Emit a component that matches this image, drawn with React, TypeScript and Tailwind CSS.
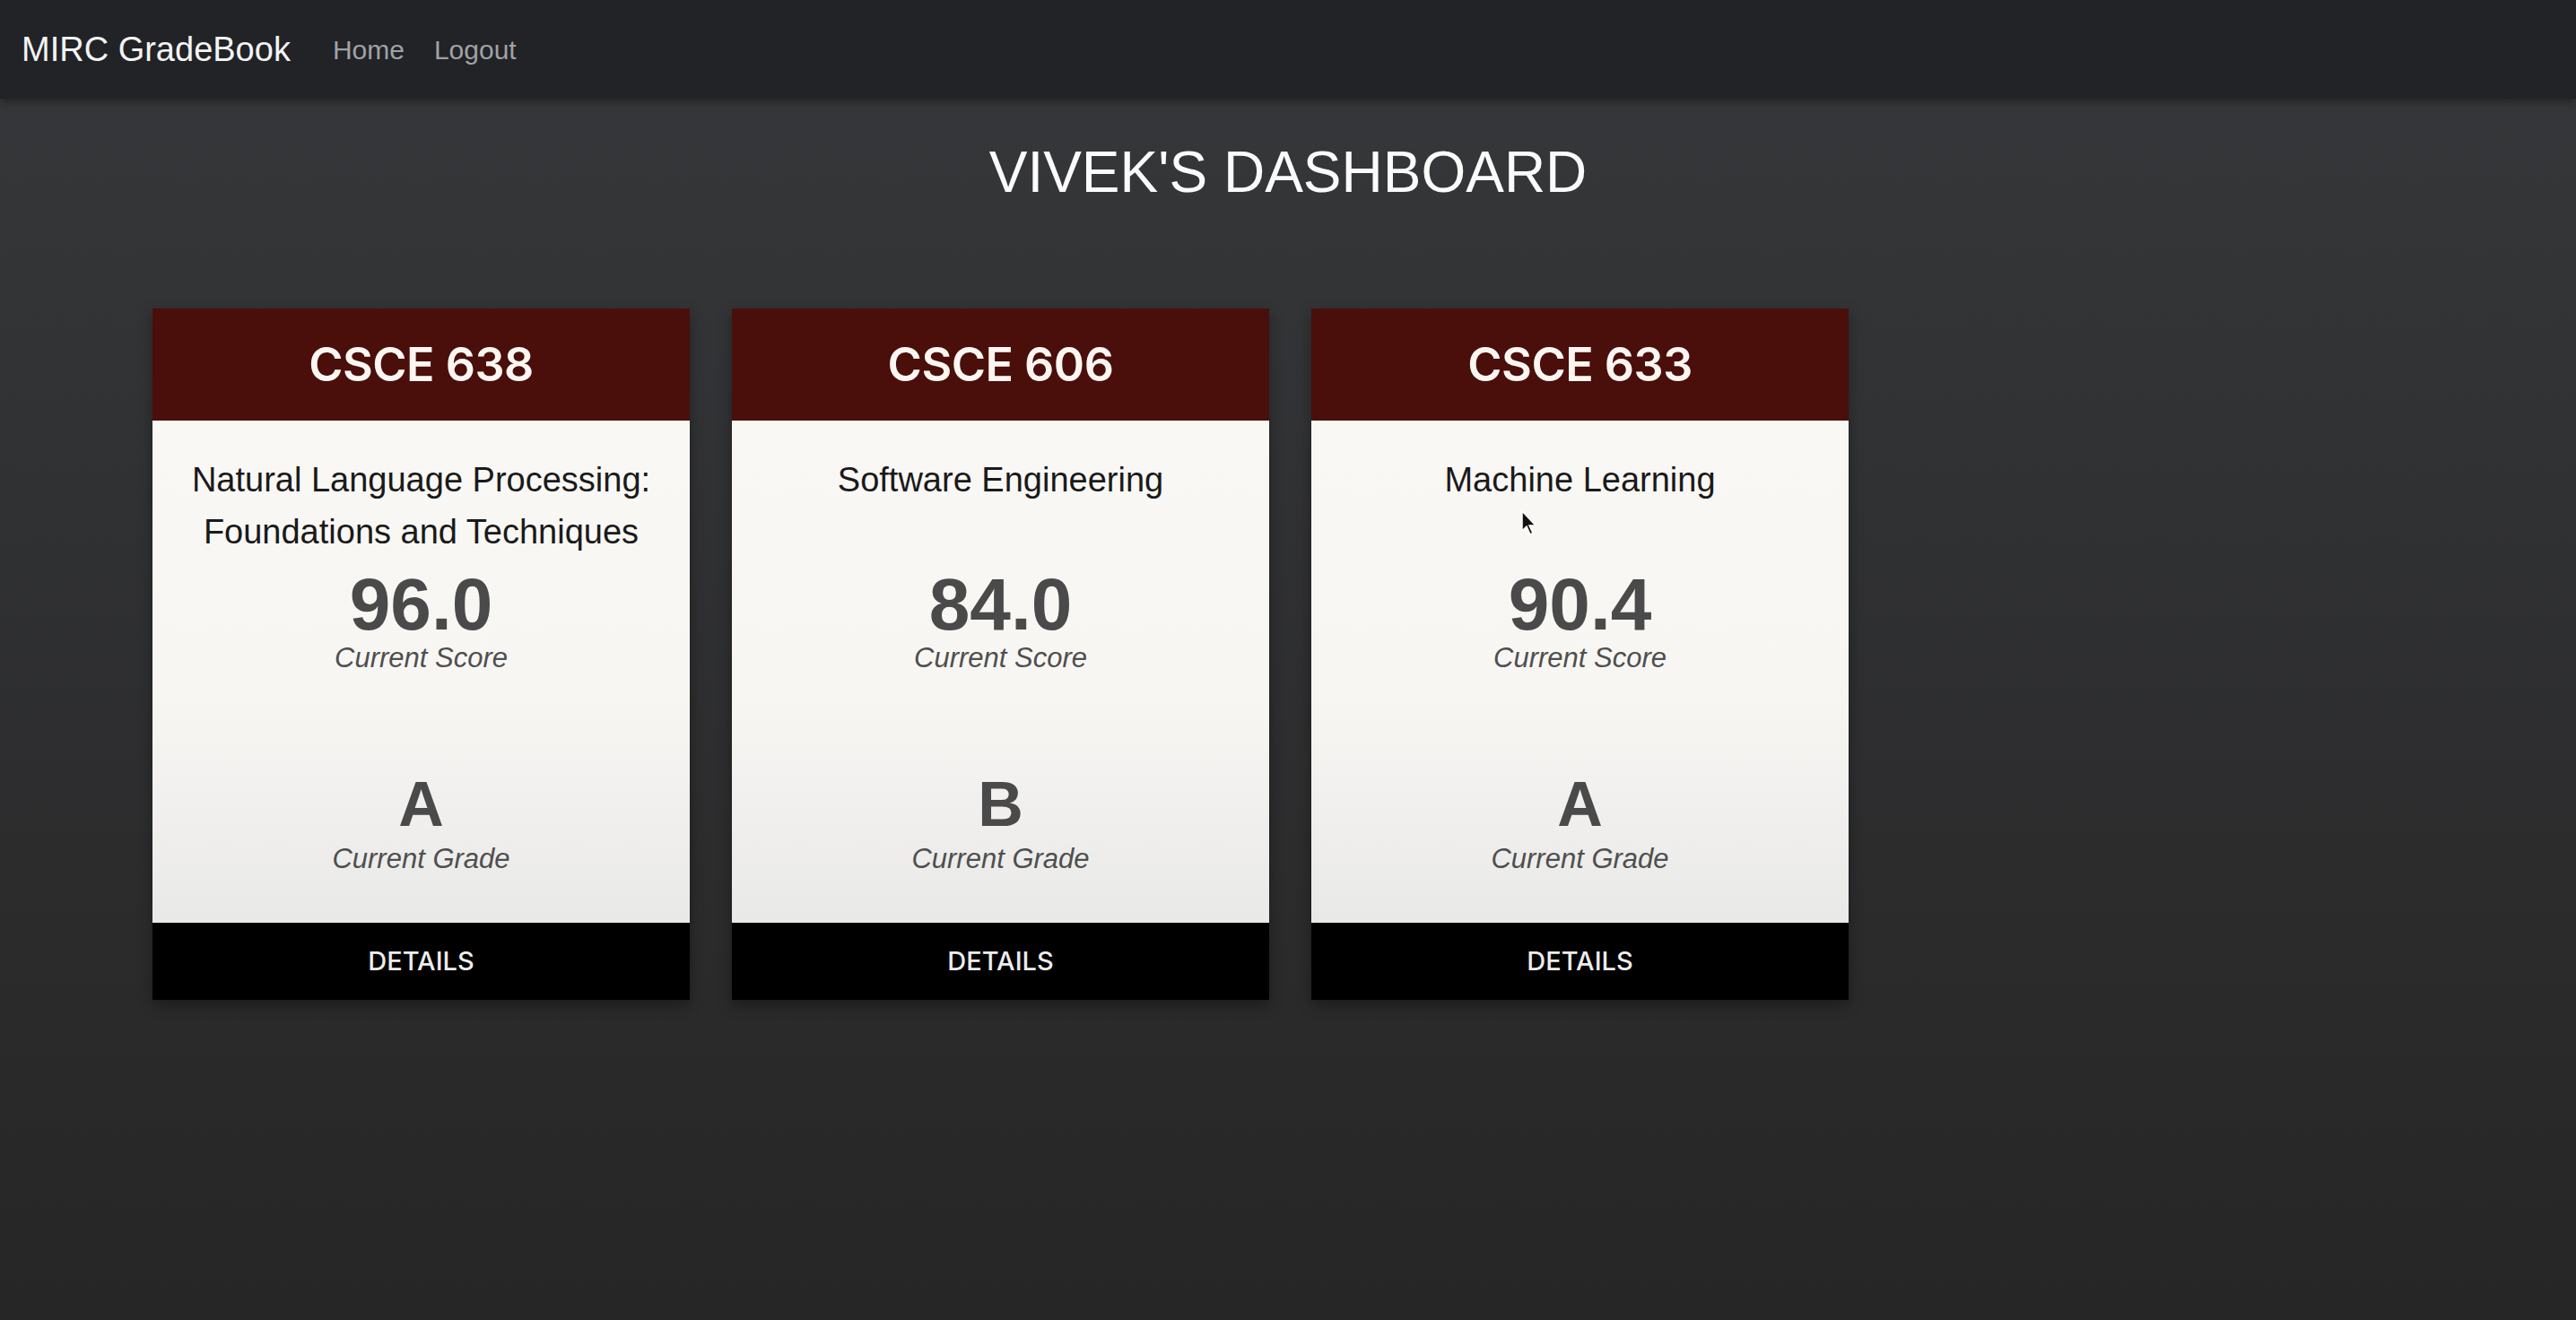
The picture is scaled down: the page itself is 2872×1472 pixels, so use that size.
import React from "react";

interface Course {
  code: string;
  name: string;
  score: string;
  grade: string;
}

const courses: Course[] = [
  { code: "CSCE 638", name: "Natural Language Processing: Foundations and Techniques", score: "96.0", grade: "A" },
  { code: "CSCE 606", name: "Software Engineering", score: "84.0", grade: "B" },
  { code: "CSCE 633", name: "Machine Learning", score: "90.4", grade: "A" },
];

const font = { fontFamily: '"Liberation Sans", Arial, sans-serif' };

function Navbar() {
  return (
    <nav className="flex h-[110px] items-center bg-[#212327] pl-[24px] shadow-[0_4px_10px_rgba(0,0,0,0.35)]">
      <span className="text-[38px] text-[#f4f4f4]">MIRC GradeBook</span>
      <div className="ml-[47px] flex items-center gap-[33px] text-[30px] text-[#a0a2a5]">
        <a>Home</a>
        <a>Logout</a>
      </div>
    </nav>
  );
}

function CourseCard({ course, cursor }: { course: Course; cursor?: boolean }) {
  return (
    <div className="relative flex w-[599px] flex-col shadow-[0_6px_14px_rgba(0,0,0,0.35)]">
      {/* Header */}
      <div className="flex h-[125px] items-center justify-center bg-[#4a0f0a]">
        <span className="font-['Inter',sans-serif] text-[52px] font-semibold tracking-[-0.5px] text-[#fbf6f2]">
          {course.code}
        </span>
      </div>

      {/* Body */}
      <div className="flex flex-col items-center bg-gradient-to-b from-[#faf8f5] via-[#f8f6f3] via-55% to-[#e9e9e8] px-[30px] pt-[37px] pb-[52px] text-center">
        <div className="min-h-[116px] text-[38px] leading-[58px] text-[#1a1a1a]">{course.name}</div>
        <div className="mt-[11px] text-[82px] font-bold leading-[82px] text-[#4a4a4a]">{course.score}</div>
        <div className="text-[31px] italic leading-[38px] text-[#4f4f4f]">Current Score</div>
        <div className="mt-[109px] text-[70px] font-bold leading-[70px] text-[#4a4a4a]">{course.grade}</div>
        <div className="mt-[7px] text-[31px] italic leading-[38px] text-[#4f4f4f]">Current Grade</div>
      </div>

      {/* Footer */}
      <button className="flex h-[86px] items-center justify-center bg-black font-['Inter',sans-serif] text-[29px] font-medium text-[#ececec]">
        DETAILS
      </button>

      {cursor && (
        <svg className="absolute left-[233px] top-[224px]" width="20" height="30" viewBox="0 0 20 30">
          <path d="M2 2 L2 24 L7 19 L11 28 L14 26.5 L10 18 L17 18 Z" fill="#111" stroke="#fff" strokeWidth="1.5" />
        </svg>
      )}
    </div>
  );
}

export default function App() {
  return (
    <div className="min-h-[1472px] bg-gradient-to-b from-[#37383b] to-[#262626]" style={font}>
      <Navbar />
      <h1 className="mt-[44px] text-center text-[64px] leading-[77px] text-[#fbfbfb]">VIVEK'S DASHBOARD</h1>
      <div className="mt-[113px] flex gap-[47px] px-[170px]">
        {courses.map((c, i) => (
          <CourseCard key={c.code} course={c} cursor={i === 2} />
        ))}
      </div>
    </div>
  );
}
